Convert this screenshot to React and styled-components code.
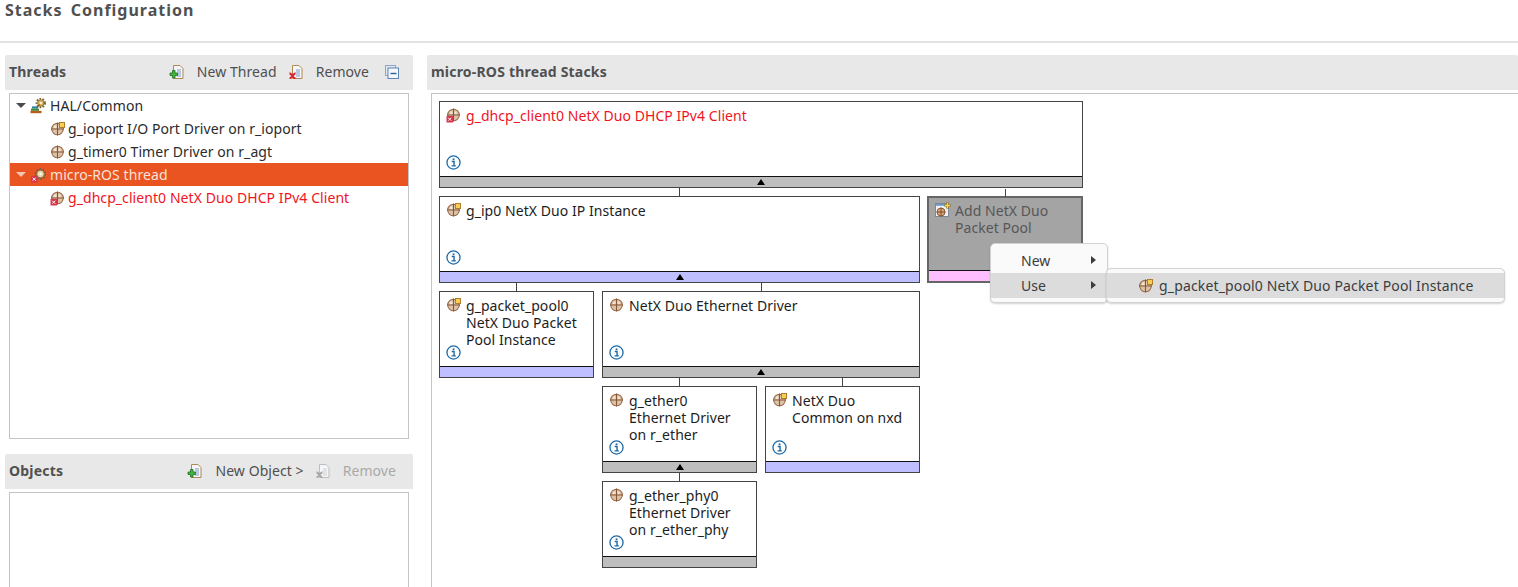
import React from "react";
import styled, { createGlobalStyle } from "styled-components";

const GlobalStyle = createGlobalStyle`
  html, body { margin: 0; padding: 0; background: #fff; }
  body { font-family: "Noto Sans", "Open Sans", sans-serif; font-size: 14px; overflow: hidden; }
`;

const Page = styled.div`
  position: relative;
  width: 1518px;
  height: 587px;
  overflow: hidden;
`;

const Title = styled.h1`
  margin: 0;
  height: 43px;
  padding: 0 0 0 5px;
  box-sizing: border-box;
  border-bottom: 2px solid #e2e2e2;
  font-size: 16px;
  line-height: 20px;
  font-weight: 700;
  letter-spacing: 1px;
  word-spacing: 3px;
  color: #505050;
`;

const Main = styled.div`
  display: flex;
  padding: 12px 0 0 5px;
  gap: 14px;
`;

const LeftColumn = styled.div`
  width: 408px;
  display: flex;
  flex-direction: column;
`;

const RightColumn = styled.div`
  flex: 1;
  display: flex;
  flex-direction: column;
`;

const SectionBar = styled.div`
  height: 35px;
  display: flex;
  align-items: center;
  justify-content: space-between;
  padding: 0 ${(p) => p.$right || 13}px 0 4px;
  background: #e8e8e8;
  border-radius: 2px 2px 0 0;
  flex-shrink: 0;
`;

const SectionTitle = styled.span`
  font-size: 14px;
  font-weight: 700;
  color: #505050;
  letter-spacing: 0.2px;
  margin-top: -2px;
`;

const Toolbar = styled.div`
  display: flex;
  align-items: center;
  gap: 11px;
`;

const ToolButton = styled.span`
  display: inline-flex;
  align-items: center;
  gap: 12px;
  font-size: 14px;
  letter-spacing: 0.07px;
  margin-top: -2px;
  color: ${(p) => (p.$disabled ? "#a9a9a9" : "#4f4f4f")};
`;

const CollapseSlot = styled.span`
  display: inline-flex;
  margin: -2px 0 0 4px;
`;

const TreeBox = styled.div`
  margin: 3px 4px 0;
  height: 346px;
  box-sizing: border-box;
  border: 1px solid #c4c4c4;
  background: #fff;
`;

const ObjectsBox = styled.div`
  margin: 3px 4px 0;
  height: 120px;
  box-sizing: border-box;
  border: 1px solid #c4c4c4;
  background: #fff;
`;

const ObjectsSection = styled.div`
  margin-top: 15px;
`;

const TreeRow = styled.div`
  height: 23px;
  display: flex;
  align-items: center;
  padding-left: ${(p) => (p.$child ? 40 : 6)}px;
  background: ${(p) => (p.$selected ? "#e95420" : "transparent")};
  color: ${(p) => (p.$selected ? "#f6e2da" : p.$error ? "#f0141e" : "#2b2b2b")};
  font-size: 14px;
  letter-spacing: 0.07px;
  white-space: nowrap;
`;

const Twisty = styled.span`
  width: 0;
  height: 0;
  margin-right: 4px;
  border-left: 5px solid transparent;
  border-right: 5px solid transparent;
  border-top: 5px solid ${(p) => (p.$light ? "#f3c6b4" : "#4a4a4a")};
`;

const RowIcon = styled.span`
  display: inline-flex;
  width: 16px;
  height: 16px;
  margin-right: ${(p) => p.$gap}px;
  flex-shrink: 0;
`;

const Canvas = styled.div`
  margin: 3px 0 0 4px;
  height: 500px;
  box-sizing: border-box;
  border-left: 1px solid #c4c4c4;
  border-top: 1px solid #c4c4c4;
  padding: 7px 0 0 7px;
  display: grid;
  grid-template-columns: repeat(4, 155px);
  grid-auto-rows: 87px;
  column-gap: 8px;
  row-gap: 8px;
`;

const footerColors = { gray: "#bebebe", blue: "#bfbfff", pink: "#ffbfff" };

const Node = styled.div`
  position: relative;
  grid-column: ${(p) => p.$col} / span ${(p) => p.$span || 1};
  grid-row: ${(p) => p.$row};
  box-sizing: border-box;
  border: ${(p) => (p.$muted ? "2px solid #666" : "1px solid #444")};
  margin-left: ${(p) => (p.$muted ? -1 : 0)}px;
  background: ${(p) => (p.$muted ? "#a4a4a4" : "#fff")};
  display: flex;
  flex-direction: column;

  &::before {
    content: ${(p) => (p.$linked ? '""' : "none")};
    position: absolute;
    left: calc(50% - 0.5px);
    top: -9px;
    width: 1px;
    height: 8px;
    background: #444;
  }
`;

const NodeBody = styled.div`
  flex: 1;
  padding: ${(p) => (p.$muted ? "4px 0 0 6px" : "5px 0 0 6px")};
  min-height: 0;
`;

const NodeHead = styled.div`
  display: flex;
  align-items: flex-start;
  gap: 4px;
  font-size: 14px;
  line-height: 17px;
  letter-spacing: 0.06px;
  color: ${(p) => (p.$error ? "#f0141e" : p.$muted ? "#575757" : "#1d1d1d")};
`;

const NodeIcon = styled.span`
  display: inline-flex;
  width: 16px;
  height: 16px;
  flex-shrink: 0;
`;

const NodeLabel = styled.span`
  white-space: pre-line;
`;

const InfoMark = styled.span`
  position: absolute;
  left: 6px;
  bottom: 17px;
  display: block;
  width: 15px;
  height: 15px;
`;

const NodeFooter = styled.div`
  height: 10px;
  flex-shrink: 0;
  border-top: 1px solid #111;
  background: ${(p) => footerColors[p.$tone]};
  display: flex;
  align-items: center;
  justify-content: center;
`;

const FooterArrow = styled.span`
  width: 0;
  height: 0;
  border-left: 4px solid transparent;
  border-right: 4px solid transparent;
  border-bottom: 6px solid #000;
`;

const Menu = styled.div`
  position: absolute;
  left: ${(p) => p.$left}px;
  top: ${(p) => p.$top}px;
  width: ${(p) => p.$width}px;
  box-sizing: border-box;
  padding: 4px 0;
  background: #fafafa;
  border: 1px solid #d2d2d2;
  border-radius: 5px;
  box-shadow: 0 1px 2px rgba(0, 0, 0, 0.18);
`;

const MenuItem = styled.div`
  position: relative;
  height: 25px;
  display: flex;
  align-items: center;
  padding-left: ${(p) => p.$indent}px;
  font-size: 14px;
  letter-spacing: ${(p) => p.$spacing || 0}px;
  white-space: nowrap;
  color: #3c3c3c;
  background: ${(p) => (p.$active ? "#dcdcdc" : "transparent")};
`;

const MenuArrow = styled.span`
  position: absolute;
  right: 11px;
  top: 8px;
  width: 0;
  height: 0;
  border-top: 4px solid transparent;
  border-bottom: 4px solid transparent;
  border-left: 5px solid #3c3c3c;
`;

const Svg = ({ children, size = 16 }) => (
  <svg width={size} height={size} viewBox="0 0 16 16" style={{ display: "block" }}>
    {children}
  </svg>
);

const ErrorBadge = ({ x = 0.5, y = 9 }) => (
  <g>
    <rect x={x} y={y} width="6.5" height="6.5" fill="#d8344e" />
    <path d={`M${x + 1.7} ${y + 1.7}l3 3m0-3l-3 3`} stroke="#fff" strokeWidth="1" />
  </g>
);

const BallIcon = ({ badge }) => (
  <Svg>
    <circle cx="7.5" cy="8" r="5.8" fill="#dcc3a8" stroke="#9a6b4a" strokeWidth="1.1" />
    <path d="M7.5 1.5v13M1 8h13" stroke="#875637" strokeWidth="1.1" />
    <path d="M4.2 4.6h2.2v2.4h-2.6zM8.6 4.6h2v2.4h-2z" fill="#f3e6d6" />
    {badge === "square" && (
      <rect x="9.5" y="1.5" width="5" height="5" fill="#f7cf55" stroke="#b07d2c" strokeWidth="1" />
    )}
    {badge === "error" && <ErrorBadge />}
  </Svg>
);

const Gear = ({ cx, cy, r, fill = "#e2b95a", stroke = "#7a5f2d" }) => (
  <g>
    <circle cx={cx} cy={cy} r={r} fill="none" stroke={stroke} strokeWidth="2" strokeDasharray="1.6 1.4" />
    <circle cx={cx} cy={cy} r={r - 1} fill={fill} stroke={stroke} strokeWidth="0.8" />
    <circle cx={cx} cy={cy} r={1.1} fill="#fff" />
  </g>
);

const HalIcon = () => (
  <Svg>
    <Gear cx={10.8} cy={5} r={4.2} />
    <path d="M6.5 10l3.4-3.4" stroke="#8a6b2f" strokeWidth="1.6" />
    <rect x="2" y="8.4" width="6" height="2.2" fill="#2f7f9e" />
    <rect x="1" y="10.6" width="8" height="2.2" fill="#3e8d3a" />
    <rect x="0.5" y="12.8" width="11" height="2.4" fill="#b85d22" />
  </Svg>
);

const ThreadErrorIcon = () => (
  <Svg>
    <Gear cx={10.5} cy={7} r={4.8} fill="#ecd9a8" stroke="#6e5f45" />
    <ErrorBadge x={1} y={9} />
  </Svg>
);

const marks = {
  plus: "M3.5 6.5h2.5v2.5h2.5v2.5h-2.5v2.5h-2.5v-2.5h-2.5v-2.5h2.5z",
  cross: "M1.5 8l3 2 3-2v2.5l-2 1.5 2 1.5v1.5h-1.5l-1.5-1.5-1.5 1.5h-1.5v-1.5l2-1.5-2-1.5z",
};

const PageIcon = ({ mark, disabled }) => (
  <Svg>
    <path d="M4.5 1.5h6.5l3 3v10h-9.5z" fill="#f4f6fa" stroke={disabled ? "#bdbdbd" : "#b08a4f"} />
    <path d="M8 6h4M8 8h4M8 10h4M8 12h4" stroke={disabled ? "#cfcfcf" : "#7f9bc9"} />
    <path
      d={marks[mark]}
      fill={disabled ? "#a8a8a8" : mark === "plus" ? "#43b53f" : "#d9232e"}
      stroke={mark === "plus" ? "#1c6d1f" : "none"}
      strokeWidth="0.8"
    />
  </Svg>
);

const CollapseIcon = () => (
  <Svg>
    <rect x="1.5" y="1.5" width="10" height="10" fill="#dfe7f3" stroke="#8fa5c4" />
    <rect x="4" y="4" width="10.5" height="10.5" fill="#f4f7fb" stroke="#5f83b3" />
    <path d="M6.5 9.5h6" stroke="#2f5f9e" strokeWidth="1.4" />
  </Svg>
);

const InfoIcon = () => (
  <Svg size={15}>
    <circle cx="8" cy="8" r="7" fill="#fff" stroke="#1d6aa8" strokeWidth="1.4" />
    <path d="M6.1 7h2.5v4.5M5.9 11.6h4.6" fill="none" stroke="#1d6aa8" strokeWidth="1.5" />
    <rect x="7.1" y="3.6" width="1.9" height="1.9" fill="#1d6aa8" />
  </Svg>
);

const AddIcon = () => (
  <Svg>
    <rect x="0.5" y="1.5" width="13" height="13" fill="#eef2f7" stroke="#7b8794" />
    <rect x="1" y="2" width="12" height="1.8" fill="#6f9ad0" />
    <circle cx="6" cy="10" r="4" fill="#d8a878" stroke="#8c5b3a" />
    <path d="M6 5.5v9M1.5 10h9" stroke="#7c4c2c" />
    <path d="M12.5 0.5v6M9.5 3.5h6" stroke="#8a6a1e" strokeWidth="2.6" />
    <path d="M12.5 1v5M10 3.5h5" stroke="#f7d84a" strokeWidth="1.4" />
  </Svg>
);

const threadRows = [
  { id: "hal", label: "HAL/Common", twisty: true, icon: <HalIcon /> },
  { id: "ioport", label: "g_ioport I/O Port Driver on r_ioport", child: true, icon: <BallIcon badge="square" /> },
  { id: "timer", label: "g_timer0 Timer Driver on r_agt", child: true, icon: <BallIcon /> },
  { id: "ros", label: "micro-ROS thread", twisty: true, selected: true, icon: <ThreadErrorIcon /> },
  { id: "dhcp", label: "g_dhcp_client0 NetX Duo DHCP IPv4 Client", child: true, error: true, icon: <BallIcon badge="error" /> },
];

const nodes = [
  { id: "dhcp", col: 1, row: 1, span: 4, label: "g_dhcp_client0 NetX Duo DHCP IPv4 Client", error: true, badge: "error", tone: "gray", arrow: true },
  { id: "ip", col: 1, row: 2, span: 3, label: "g_ip0 NetX Duo IP Instance", badge: "square", tone: "blue", arrow: true, linked: true },
  { id: "add", col: 4, row: 2, label: "Add NetX Duo\nPacket Pool", add: true, muted: true, tone: "pink", linked: true },
  { id: "pool", col: 1, row: 3, label: "g_packet_pool0\nNetX Duo Packet\nPool Instance", badge: "square", tone: "blue", linked: true },
  { id: "eth", col: 2, row: 3, span: 2, label: "NetX Duo Ethernet Driver", tone: "gray", arrow: true, linked: true },
  { id: "ether0", col: 2, row: 4, label: "g_ether0\nEthernet Driver\non r_ether", tone: "gray", arrow: true, linked: true },
  { id: "common", col: 3, row: 4, label: "NetX Duo\nCommon on nxd", badge: "square", tone: "blue", linked: true },
  { id: "phy", col: 2, row: 5, label: "g_ether_phy0\nEthernet Driver\non r_ether_phy", tone: "gray", linked: true },
];

export default function App() {
  return (
    <Page>
      <GlobalStyle />
      <Title>Stacks Configuration</Title>
      <Main>
        <LeftColumn>
          <SectionBar>
            <SectionTitle>Threads</SectionTitle>
            <Toolbar>
              <ToolButton><PageIcon mark="plus" />New Thread</ToolButton>
              <ToolButton><PageIcon mark="cross" />Remove</ToolButton>
              <CollapseSlot><CollapseIcon /></CollapseSlot>
            </Toolbar>
          </SectionBar>
          <TreeBox>
            {threadRows.map((row) => (
              <TreeRow key={row.id} $child={row.child} $selected={row.selected} $error={row.error}>
                {row.twisty && <Twisty $light={row.selected} />}
                <RowIcon $gap={row.child ? 2 : 4}>{row.icon}</RowIcon>
                {row.label}
              </TreeRow>
            ))}
          </TreeBox>
          <ObjectsSection>
            <SectionBar $right={17}>
              <SectionTitle>Objects</SectionTitle>
              <Toolbar>
                <ToolButton><PageIcon mark="plus" />New Object &gt;</ToolButton>
                <ToolButton $disabled><PageIcon mark="cross" disabled />Remove</ToolButton>
              </Toolbar>
            </SectionBar>
            <ObjectsBox />
          </ObjectsSection>
        </LeftColumn>
        <RightColumn>
          <SectionBar>
            <SectionTitle>micro-ROS thread Stacks</SectionTitle>
          </SectionBar>
          <Canvas>
            {nodes.map((n) => (
              <Node key={n.id} $col={n.col} $row={n.row} $span={n.span} $muted={n.muted} $linked={n.linked}>
                <NodeBody $muted={n.muted}>
                  <NodeHead $error={n.error} $muted={n.muted}>
                    <NodeIcon>{n.add ? <AddIcon /> : <BallIcon badge={n.badge} />}</NodeIcon>
                    <NodeLabel>{n.label}</NodeLabel>
                  </NodeHead>
                </NodeBody>
                {!n.muted && <InfoMark><InfoIcon /></InfoMark>}
                <NodeFooter $tone={n.tone}>{n.arrow && <FooterArrow />}</NodeFooter>
              </Node>
            ))}
          </Canvas>
        </RightColumn>
      </Main>
      <Menu $left={990} $top={243} $width={118}>
        <MenuItem $indent={30}>New<MenuArrow /></MenuItem>
        <MenuItem $indent={30} $active>Use<MenuArrow /></MenuItem>
      </Menu>
      <Menu $left={1106} $top={268} $width={399}>
        <MenuItem $indent={31} $active $spacing={0.15}>
          <RowIcon $gap={5}><BallIcon badge="square" /></RowIcon>
          g_packet_pool0 NetX Duo Packet Pool Instance
        </MenuItem>
      </Menu>
    </Page>
  );
}
